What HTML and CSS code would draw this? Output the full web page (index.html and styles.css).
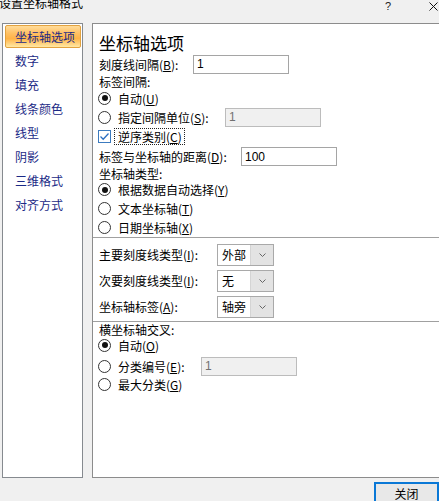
FILE: index.html
```html
<!DOCTYPE html>
<html>
<head>
<meta charset="utf-8">
<link rel="stylesheet" href="styles.css">
</head>
<body>
<div class="titlebar">
  <span class="title">设置坐标轴格式</span>
  <span class="help">?</span>
  <span class="close"><svg width="9" height="9" viewBox="0 0 9 9"><path d="M0.5 0.5L8.5 8.5M8.5 0.5L0.5 8.5" stroke="#111" stroke-width="1" fill="none"/></svg></span>
</div>
<div class="main">
  <div class="sidebar">
    <div class="item sel">坐标轴选项</div>
    <div class="item">数字</div>
    <div class="item">填充</div>
    <div class="item">线条颜色</div>
    <div class="item">线型</div>
    <div class="item">阴影</div>
    <div class="item">三维格式</div>
    <div class="item">对齐方式</div>
  </div>
  <div class="content">
    <div class="heading">坐标轴选项</div>
    <div class="row h22"><span class="lbl w-tick">刻度线间隔(<u>B</u>):</span><span class="field">1</span></div>
    <div class="row h13">标签间隔:</div>
    <div class="row h20"><span class="radio on"></span>自动(<u>U</u>)</div>
    <div class="row h18"><span class="lbl w-spec"><span class="radio"></span>指定间隔单位(<u>S</u>):</span><span class="field off">1</span></div>
    <div class="row h20"><span class="check"><svg width="11" height="11" viewBox="0 0 11 11"><path d="M1.5 5.5L4.2 8.2L9.5 2.5" stroke="#2b6fc2" stroke-width="1.3" fill="none"/></svg></span><span class="focus">逆序类别(<u>C</u>)</span></div>
    <div class="row h21"><span class="lbl w-dist">标签与坐标轴的距离(<u>D</u>):</span><span class="field">100</span></div>
    <div class="row h13">坐标轴类型:</div>
    <div class="row h19"><span class="radio on"></span>根据数据自动选择(<u>Y</u>)</div>
    <div class="row h19"><span class="radio"></span>文本坐标轴(<u>T</u>)</div>
    <div class="row h19"><span class="radio"></span>日期坐标轴(<u>X</u>)</div>
    <div class="sep"></div>
    <div class="combos">
      <div class="row h23"><span class="lbl w-combo">主要刻度线类型(<u>I</u>):</span><span class="combo"><span class="val">外部</span><span class="drop"><svg width="7" height="4" viewBox="0 0 7 4"><path d="M0.5 0.5L3.5 3.5L6.5 0.5" stroke="#666" fill="none"/></svg></span></span></div>
      <div class="row h23"><span class="lbl w-combo">次要刻度线类型(<u>I</u>):</span><span class="combo"><span class="val">无</span><span class="drop"><svg width="7" height="4" viewBox="0 0 7 4"><path d="M0.5 0.5L3.5 3.5L6.5 0.5" stroke="#666" fill="none"/></svg></span></span></div>
      <div class="row h23"><span class="lbl w-combo">坐标轴标签(<u>A</u>):</span><span class="combo"><span class="val">轴旁</span><span class="drop"><svg width="7" height="4" viewBox="0 0 7 4"><path d="M0.5 0.5L3.5 3.5L6.5 0.5" stroke="#666" fill="none"/></svg></span></span></div>
    </div>
    <div class="sep"></div>
    <div class="row h14">横坐标轴交叉:</div>
    <div class="row h18"><span class="radio on"></span>自动(<u>O</u>)</div>
    <div class="row h24"><span class="lbl w-cat"><span class="radio"></span>分类编号(<u>E</u>):</span><span class="field off">1</span></div>
    <div class="row h12"><span class="radio"></span>最大分类(<u>G</u>)</div>
  </div>
</div>
<div class="footer">
  <button class="btn">关闭</button>
</div>
</body>
</html>
```

FILE: styles.css
```css
html, body {
  margin: 0;
  padding: 0;
}
body {
  width: 439px;
  height: 501px;
  overflow: hidden;
  background: #f0f0f0;
  font-family: "Noto Sans CJK SC", "Microsoft YaHei", sans-serif;
  font-size: 12px;
  color: #000;
}
.titlebar {
  height: 23px;
  display: flex;
  align-items: flex-start;
  overflow: hidden;
}
.title {
  margin-left: -1px;
  margin-top: -3px;
  line-height: 12px;
}
.help {
  margin-left: auto;
  margin-top: 0;
  line-height: 12px;
  font-family: "Liberation Sans", sans-serif;
  font-size: 11px;
  color: #222;
}
.close {
  margin-left: 38px;
  margin-right: 1px;
  margin-top: 2px;
  width: 9px;
  height: 9px;
  display: flex;
}
.main {
  display: flex;
  height: 455px;
  padding-left: 2px;
  gap: 9px;
}
.sidebar {
  width: 81px;
  flex-shrink: 0;
  box-sizing: border-box;
  border: 1px solid #868a8f;
  background: #fff;
  padding: 1px 1px 0 2px;
}
.item {
  height: 23px;
  margin-bottom: 1px;
  box-sizing: border-box;
  display: flex;
  align-items: center;
  padding-left: 10px;
  color: #1b2a86;
  white-space: nowrap;
}
.item.sel {
  border: 1px solid #e2a23f;
  border-radius: 2px;
  padding-left: 9px;
  background: linear-gradient(#ffdc9a 0%, #ffc063 35%, #ffb347 60%, #ffe9a6 100%);
}
.content {
  width: 420px;
  flex-shrink: 0;
  box-sizing: border-box;
  border: 1px solid #8c8c8c;
  border-right: none;
  background: #fff;
  padding: 7px 0 0 6px;
}
.heading {
  height: 22px;
  display: flex;
  align-items: center;
  font-size: 17px;
}
.row {
  display: flex;
  align-items: center;
  white-space: nowrap;
}
.h12 { height: 12px; }
.h13 { height: 13px; }
.h14 { height: 14px; }
.h18 { height: 18px; }
.h19 { height: 19px; }
.h20 { height: 20px; }
.h21 { height: 21px; }
.h22 { height: 22px; }
.h23 { height: 23px; }
.h24 { height: 24px; }
.lbl {
  display: flex;
  align-items: center;
  flex-shrink: 0;
}
.w-tick { width: 94px; }
.w-spec { width: 126px; }
.w-dist { width: 142px; }
.w-cat { width: 102px; }
.w-combo { width: 118px; }
.field {
  width: 96px;
  height: 19px;
  box-sizing: border-box;
  border: 1px solid #a5a5a5;
  background: #fff;
  padding-left: 3px;
  display: flex;
  align-items: center;
  font-family: "Liberation Sans", sans-serif;
  font-size: 12px;
}
.field.off {
  background: #f0f0f0;
  border-color: #bcbcbc;
  color: #707070;
}
.radio {
  width: 13px;
  height: 13px;
  box-sizing: border-box;
  border: 1px solid #333;
  border-radius: 50%;
  background: #fff;
  margin-left: -1px;
  margin-right: 7px;
  flex-shrink: 0;
  display: flex;
  align-items: center;
  justify-content: center;
}
.radio.on::after {
  content: "";
  width: 6px;
  height: 6px;
  border-radius: 50%;
  background: #111;
}
.check {
  width: 13px;
  height: 13px;
  box-sizing: border-box;
  border: 1px solid #3c7bbf;
  background: #fff;
  margin-left: -1px;
  margin-right: 4px;
  display: flex;
  align-items: center;
  justify-content: center;
}
.focus {
  outline: 1px dotted #222;
  padding: 1px 2px 1px 3px;
  line-height: 13px;
}
.sep {
  border-top: 1px solid #a0a0a0;
  margin-left: -6px;
}
.combos {
  padding-top: 5px;
  padding-bottom: 3px;
  display: flex;
  flex-direction: column;
  gap: 3px;
}
.combo {
  width: 57px;
  height: 22px;
  box-sizing: border-box;
  border: 1px solid #a9a9a9;
  display: flex;
}
.combo .val {
  flex: 1;
  background: #fff;
  padding-left: 4px;
  display: flex;
  align-items: center;
}
.combo .drop {
  width: 22px;
  background: #e3e3e3;
  border-left: 1px solid #d4d4d4;
  display: flex;
  align-items: center;
  justify-content: center;
}
.footer {
  height: 23px;
  box-sizing: border-box;
  padding-top: 4px;
  display: flex;
  justify-content: flex-end;
}
.btn {
  width: 65px;
  height: 23px;
  box-sizing: border-box;
  border: 2px solid #0a78d6;
  background: #e8e8e8;
  font-family: "Noto Sans CJK SC", sans-serif;
  font-size: 12px;
  padding: 0;
  margin: 0;
  color: #000;
}
```
